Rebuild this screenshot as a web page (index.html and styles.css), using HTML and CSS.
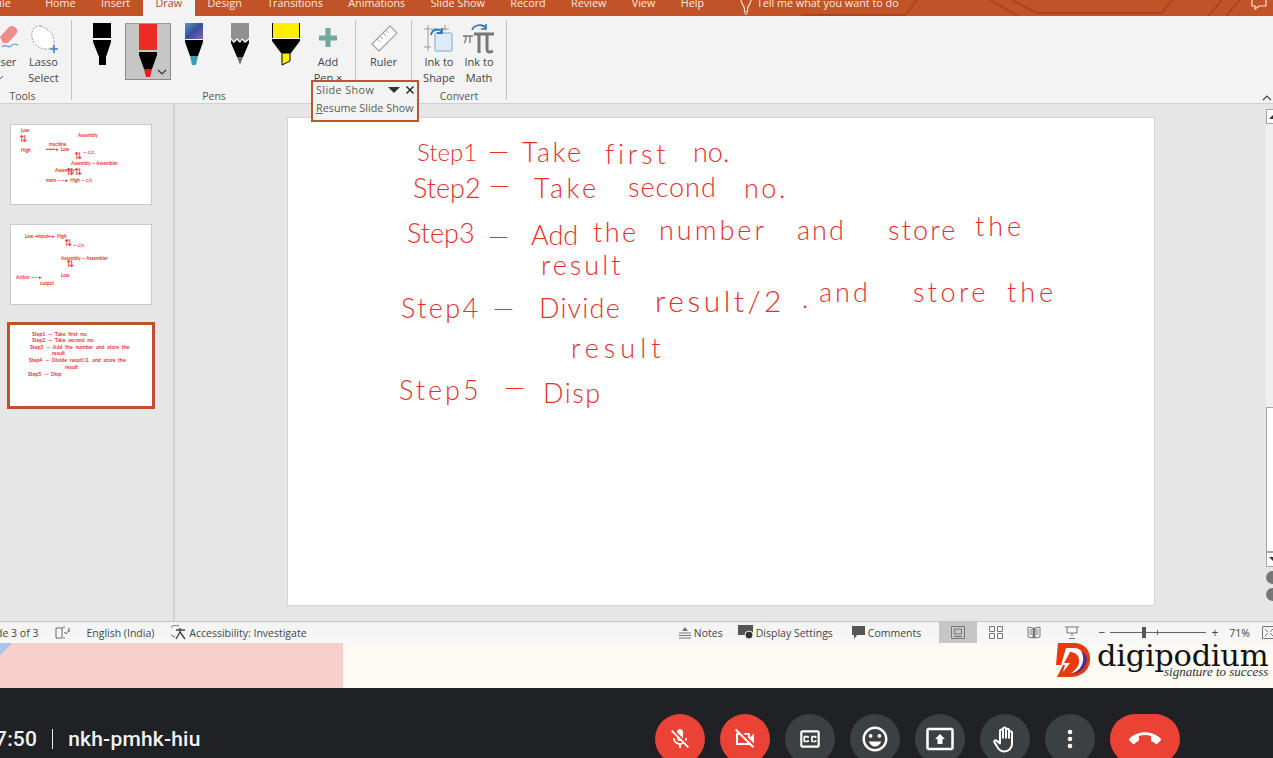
FILE: index.html
```html
<!DOCTYPE html>
<html lang="en">

<head>
    <meta charset="UTF-8">
    <meta name="viewport" content="width=device-width, initial-scale=1.0">
    <title>Draw - PowerPoint</title>
    <link rel="stylesheet" href="styles.css">
</head>

<body>
    <div class="tabbar">
        <svg class="circuit" width="1273" height="16" viewBox="0 0 1273 16">
            <path d="M802 15H905L917 0M990 0L1018 16M1012 0L1036 13H1162L1172 0M1208 16L1222 0M1226 16L1240 0" fill="none" stroke="#a94522" stroke-width="2" />
        </svg>
        <div class="tab tab-file">File</div>
        <div class="tab">Home</div>
        <div class="tab">Insert</div>
        <div class="tab tab-active">Draw</div>
        <div class="tab">Design</div>
        <div class="tab">Transitions</div>
        <div class="tab">Animations</div>
        <div class="tab">Slide Show</div>
        <div class="tab">Record</div>
        <div class="tab">Review</div>
        <div class="tab">View</div>
        <div class="tab">Help</div>
        <svg class="bulb" width="16" height="16" viewBox="0 0 16 16">
            <path d="M3 0C3 4 6 5 6.500 9V12H9.500V9C10 5 13 4 13 0M6.500 14H9.500" fill="none" stroke="#f5e3d8" stroke-width="1.200" />
        </svg>
        <div class="tell">Tell me what you want to do</div>
        <svg class="comment-icon" width="16" height="16" viewBox="0 0 16 16">
            <path d="M1 0V6H4V9L8 6H15V0" fill="none" stroke="#f8e6dc" stroke-width="1.200" />
        </svg>
    </div>

    <div class="ribbon">
        <div class="group group-tools">
            <div class="tools">
                <div class="tool tool-eraser">
                    <svg width="44" height="34" viewBox="0 0 44 34">
                        <path d="M22 14L31 4C33 2 36 3 38 5C40 7 40 9 38 11L30 20H25Z" fill="#ee8b8b" />
                        <path d="M24 24C28 20 30 26 33 23S37 21 40 22" fill="none" stroke="#5b9bd5" stroke-width="1.200" />
                    </svg>
                    <span>Eraser</span>
                    <svg class="caret" width="8" height="5" viewBox="0 0 8 5">
                        <path d="M1 1L4 4L7 1" fill="none" stroke="#555" />
                    </svg>
                </div>
                <div class="tool tool-lasso">
                    <svg width="34" height="34" viewBox="0 0 34 34">
                        <path d="M14 3C7 2 4 8 5 14C6 21 11 25 18 26C24 27 28 24 27 18C26 14 26 10 22 8C19 6 18 4 14 3Z" fill="#fff" stroke="#999" stroke-dasharray="2 1.500" />
                        <path d="M27 22V30M23 26H31" stroke="#3d85c6" stroke-width="1.600" />
                    </svg>
                    <span>Lasso<br>Select</span>
                </div>
            </div>
            <div class="group-label">Tools</div>
        </div>

        <div class="group group-pens">
            <div class="tools">
                <div class="pen">
                    <svg width="20" height="43" viewBox="0 0 20 43">
                        <path d="M1 0H19V15H1ZM1 17H19V19L14 34V42H7V34L1 19Z" fill="#000" />
                    </svg>
                </div>
                <div class="pen pen-selected">
                    <svg width="20" height="54" viewBox="0 0 20 54">
                        <path d="M1 0H19V26H1Z" fill="#ee2a24" />
                        <path d="M1 28H19V31L14 45H6L1 31Z" fill="#000" />
                        <path d="M6 45H14L12 53H8Z" fill="#d8201c" />
                    </svg>
                    <svg class="pen-caret" width="10" height="6" viewBox="0 0 10 6">
                        <path d="M1 1L5 5L9 1" fill="none" stroke="#333" stroke-width="1.200" />
                    </svg>
                </div>
                <div class="pen">
                    <svg width="20" height="43" viewBox="0 0 20 43">
                        <defs>
                            <linearGradient id="galaxy" x1="0" y1="0" x2="1" y2="1">
                                <stop offset="0" stop-color="#4aa3c4" />
                                <stop offset="0.500" stop-color="#3b4a9c" />
                                <stop offset="1" stop-color="#7a6bb5" />
                            </linearGradient>
                        </defs>
                        <path d="M1 0H19V16H1Z" fill="url(#galaxy)" />
                        <path d="M1 17H19V19L14 33H6L1 19Z" fill="#000" />
                        <path d="M6 33H14L12 42H8Z" fill="#3d9db5" />
                    </svg>
                </div>
                <div class="pen">
                    <svg width="20" height="43" viewBox="0 0 20 43">
                        <path d="M1 0H19V15L15 18L12 15L10 18L7 15L4 18L1 15Z" fill="#8b9194" />
                        <path d="M1 17L4 20L7 17L10 20L12 17L15 20L19 17V20L13 34H7L1 20Z" fill="#000" />
                        <path d="M7 34H13L10 42Z" fill="#6b7072" />
                    </svg>
                </div>
                <div class="pen">
                    <svg width="28" height="43" viewBox="0 0 28 43">
                        <path d="M0 0H28V15H0Z" fill="#ffee00" />
                        <path d="M0 0H1V15H0ZM27 0H28V15H27Z" fill="#000" />
                        <path d="M0 16H28V18L19 30H9L0 18Z" fill="#000" />
                        <path d="M10 30H18V38L10 42Z" fill="#ffee00" stroke="#000" />
                    </svg>
                </div>
                <div class="tool tool-add">
                    <svg width="20" height="34" viewBox="0 0 20 34">
                        <path d="M7.500 5H12.500V12.500H19V17.500H12.500V24H7.500V17.500H1V12.500H7.500Z" fill="#6fa99a" />
                    </svg>
                    <span>Add<br>Pen ×</span>
                </div>
            </div>
            <div class="group-label">Pens</div>
        </div>

        <div class="group group-ruler">
            <div class="tools">
                <div class="tool tool-ruler">
                    <svg width="30" height="34" viewBox="0 0 30 34">
                        <path d="M3 21L21 3L28 10L10 28Z" fill="#fff" stroke="#a8a8a8" stroke-width="1.300" />
                        <path d="M8 16L11 19M11 13L14 16M14 10L17 13M17 7L20 10" stroke="#a8a8a8" />
                    </svg>
                    <span>Ruler</span>
                </div>
            </div>
        </div>

        <div class="group group-convert">
            <div class="tools">
                <div class="tool tool-ink">
                    <svg width="32" height="34" viewBox="0 0 32 34">
                        <path d="M5 2V28M1 6H26M1 24H8M22 2V8" stroke="#9a9a9a" />
                        <rect x="12" y="10" width="17" height="18" rx="1" fill="#dcebf7" stroke="#7fa9c9" />
                        <path d="M8 12C9 6 16 5 19 9M19 5V10H14" fill="none" stroke="#2e75b6" stroke-width="1.800" />
                    </svg>
                    <span>Ink to<br>Shape</span>
                </div>
                <div class="tool tool-ink">
                    <svg width="34" height="34" viewBox="0 0 34 34">
                        <path d="M1 13H11M4 13C4 16 3 19 2 20M8 13V20" fill="none" stroke="#777" stroke-width="1.300" />
                        <path d="M12 11H32M17 11V30M25 11V26C25 29 27 30 31 28" fill="none" stroke="#777" stroke-width="3" />
                        <path d="M10 7C12 2 20 0 24 5M24 1V6H19" fill="none" stroke="#2e75b6" stroke-width="1.600" />
                    </svg>
                    <span>Ink to<br>Math</span>
                </div>
            </div>
            <div class="group-label">Convert</div>
        </div>

        <svg class="collapse" width="10" height="6" viewBox="0 0 10 6">
            <path d="M1 5L5 1L9 5" fill="none" stroke="#444" stroke-width="1.200" />
        </svg>
    </div>

    <div class="popup">
        <div class="popup-title">
            <span class="popup-name">Slide Show</span>
            <span class="popup-arrow"></span>
            <svg width="8" height="8" viewBox="0 0 8 8">
                <path d="M0.500 0.500L7.500 7.500M7.500 0.500L0.500 7.500" stroke="#222" stroke-width="1.400" />
            </svg>
        </div>
        <div class="popup-item"><u>R</u>esume Slide Show</div>
    </div>

    <div class="main">
        <div class="pane">
            <div class="thumb thumb-a">
                <span class="t-ink ta1">Low</span>
                <span class="t-ink t-arrow ta2">⇅</span>
                <span class="t-ink ta3">High</span>
                <span class="t-ink ta4">Assembly</span>
                <span class="t-ink ta5">machine</span>
                <span class="t-ink ta6">━━━► Low</span>
                <span class="t-ink t-arrow ta7">⇅</span>
                <span class="t-ink ta8">— c/c</span>
                <span class="t-ink ta9">Assembly — Assembler</span>
                <span class="t-ink ta10">Assembly</span>
                <span class="t-ink t-arrow ta11">⇅⇅</span>
                <span class="t-ink ta12">mem ——► High — c/c</span>
            </div>
            <div class="thumb thumb-b">
                <span class="t-ink tb1">Low ━input━► High</span>
                <span class="t-ink t-arrow tb2">⇅</span>
                <span class="t-ink tb3">— c/c</span>
                <span class="t-ink tb4">Assembly — Assembler</span>
                <span class="t-ink t-arrow tb5">⇅</span>
                <span class="t-ink tb6">Low</span>
                <span class="t-ink tb7">Action ——►</span>
                <span class="t-ink tb8">output</span>
            </div>
            <div class="thumb thumb-c">
                <span class="t-ink tc tc1">Step1 — Take first no.</span>
                <span class="t-ink tc tc2">Step2 — Take second no.</span>
                <span class="t-ink tc tc3">Step3 — Add the number and store the</span>
                <span class="t-ink tc tc4">result</span>
                <span class="t-ink tc tc5">Step4 — Divide result/2. and store the</span>
                <span class="t-ink tc tc6">result</span>
                <span class="t-ink tc tc7">Step5 — Disp</span>
            </div>
        </div>
        <div class="canvas">
            <div class="slide">
                <span class="ink a1">Step1</span>
                <span class="ink a2">—</span>
                <span class="ink a3">Take</span>
                <span class="ink a4">first</span>
                <span class="ink a5">no.</span>

                <span class="ink b1">Step2</span>
                <span class="ink b2">—</span>
                <span class="ink b3">Take</span>
                <span class="ink b4">second</span>
                <span class="ink b5">no.</span>

                <span class="ink c1">Step3</span>
                <span class="ink c2">—</span>
                <span class="ink c3">Add</span>
                <span class="ink c4">the</span>
                <span class="ink c5">number</span>
                <span class="ink c6">and</span>
                <span class="ink c7">store</span>
                <span class="ink c8">the</span>
                <span class="ink c9">result</span>

                <span class="ink d1">Step4</span>
                <span class="ink d2">—</span>
                <span class="ink d3">Divide</span>
                <span class="ink d4">result/2</span>
                <span class="ink d5">.</span>
                <span class="ink d6">and</span>
                <span class="ink d7">store</span>
                <span class="ink d8">the</span>
                <span class="ink d9">result</span>

                <span class="ink e1">Step5</span>
                <span class="ink e2">—</span>
                <span class="ink e3">Disp</span>
            </div>
        </div>
        <div class="scrollbar">
            <div class="sb-btn"><span class="tri-up"></span></div>
            <div class="sb-track"></div>
            <div class="sb-thumb"></div>
            <div class="sb-btn"><span class="tri-down"></span></div>
            <div class="sb-page"></div>
            <div class="sb-page"></div>
        </div>
    </div>

    <div class="statusbar">
        <span class="st-slide">Slide 3 of 3</span>
        <svg class="st-book" width="15" height="14" viewBox="0 0 15 14">
            <path d="M7 2H1V12H7V2ZM7 2C8 1 9 1 10 1M10 12H8M14 2V6M9 6L11 8L14 4" fill="none" stroke="#666" />
        </svg>
        <span class="st-lang">English (India)</span>
        <svg class="st-access" width="16" height="15" viewBox="0 0 16 15">
            <path d="M8 1A6 6 0 1 0 4 12" fill="none" stroke="#666" />
            <path d="M9 3V7M5 5H14M9 7L5 14M9 7L14 14" fill="none" stroke="#444" stroke-width="1.400" />
        </svg>
        <span class="st-a11y">Accessibility: Investigate</span>

        <div class="st-right">
            <svg width="12" height="12" viewBox="0 0 12 12">
                <path d="M0 6H12M0 8.500H12M0 11H12" stroke="#777" />
                <path d="M6 0L9 4H3Z" fill="#777" />
            </svg>
            <span class="st-notes">Notes</span>
            <svg class="st-display" width="16" height="15" viewBox="0 0 16 15">
                <path d="M0 0H15V10H0Z" fill="#555" />
                <circle cx="11" cy="10" r="4" fill="#333" stroke="#f2f2f2" />
            </svg>
            <span class="st-settings">Display Settings</span>
            <svg class="st-comment" width="13" height="13" viewBox="0 0 13 13">
                <path d="M0 0H13V9H5L2 13V9H0Z" fill="#555" />
            </svg>
            <span class="st-comments">Comments</span>
            <div class="view view-active">
                <svg width="14" height="13" viewBox="0 0 14 13">
                    <path d="M.500.500H13.500V12.500H.500ZM3.500 3H10.500V8H3.500ZM3 10.500H11" fill="none" stroke="#777" />
                </svg>
            </div>
            <div class="view">
                <svg width="14" height="13" viewBox="0 0 14 13">
                    <path d="M.500.500H5.500V5.500H.500ZM8.500.500H13.500V5.500H8.500ZM.500 7.500H5.500V12.500H.500ZM8.500 7.500H13.500V12.500H8.500Z" fill="none" stroke="#777" />
                </svg>
            </div>
            <div class="view">
                <svg width="14" height="13" viewBox="0 0 14 13">
                    <path d="M1 1L6 2V12L1 11ZM13 1L8 2V12L13 11ZM6.500 2H7.500V12H6.500ZM2.500 4H5M2.500 6H5M2.500 8H5M9 4H11.500M9 6H11.500M9 8H11.500" fill="none" stroke="#777" />
                </svg>
            </div>
            <div class="view">
                <svg width="14" height="13" viewBox="0 0 14 13">
                    <path d="M0 1H14M2 1.500V7H12V1.500M7 7V10M4 12.500H10" fill="none" stroke="#777" />
                </svg>
            </div>
            <div class="zoom">
                <span class="zoom-sign">−</span>
                <div class="slider">
                    <span class="slider-mid"></span>
                    <span class="slider-thumb"></span>
                </div>
                <span class="zoom-sign">+</span>
            </div>
            <span class="st-pct">71%</span>
            <svg class="st-fit" width="14" height="13" viewBox="0 0 14 13">
                <path d="M.500.500H13.500V12.500H.500ZM3 3L6 6M11 3L8 6M3 10L6 7M11 10L8 7" fill="none" stroke="#777" />
            </svg>
        </div>
    </div>

    <div class="strip">
        <div class="strip-left"></div>
        <div class="strip-right">
            <svg class="logo-mark" width="38" height="35" viewBox="3 0 36 35">
                <path d="M6 0H22C33 0 39 8 38 18C37 28 29 34 18 34H5L11 22H4Z" fill="#e93a0c" />
                <path d="M14 5H22C29 5 33 11 32 18C31 24 26 29 19 30C25 26 28 21 27 16C26 11 22 9 18 9L12 20H18L11 29L13 22H9Z" fill="#fff" />
                <path d="M29 8C33 14 32 24 22 31C28 30 35 24 35 16C35 13 33 10 29 8Z" fill="#5a2a8c" />
            </svg>
            <div class="logo-text">
                <div class="logo-name">digipodium</div>
                <div class="logo-tag">signature to success</div>
            </div>
        </div>
    </div>

    <div class="meetbar">
        <div class="meet-info">
            <span class="meet-time">7:50</span>
            <span class="meet-divider"></span>
            <span class="meet-code">nkh-pmhk-hiu</span>
        </div>
        <div class="meet-controls">
            <div class="ctrl ctrl-red">
                <svg width="24" height="24" viewBox="0 0 24 24">
                    <path d="M19 11h-1.700c0 .74-.16 1.430-.43 2.050l1.230 1.230c.56-.98.9-2.090.9-3.280zm-4.020.17c0-.06.02-.11.02-.17V5c0-1.660-1.340-3-3-3s-3 1.340-3 3v.18l5.980 5.990zM4.270 3L3 4.270l6.010 6.010V11c0 1.660 1.330 3 2.990 3 .22 0 .44-.03.65-.08l1.660 1.660c-.71.33-1.500.52-2.310.52-2.760 0-5.300-2.100-5.300-5.100H5c0 3.410 2.720 6.230 6 6.720V21h2v-3.280c.91-.13 1.770-.45 2.540-.9L19.730 21 21 19.730 4.270 3z" />
                </svg>
            </div>
            <div class="ctrl ctrl-red">
                <svg width="24" height="24" viewBox="0 0 24 24">
                    <path d="M9.560 8l-2-2-4.150-4.140L2 3.270 4.730 6H4c-.55 0-1 .45-1 1v10c0 .55.45 1 1 1h12c.21 0 .39-.08.55-.18L19.730 21l1.410-1.410-8.860-8.860L9.560 8zM5 16V8h1.730l8 8H5zm10-8v2.610l6 6V6.500l-4 4V7c0-.55-.45-1-1-1h-5.610l2 2H15z" />
                </svg>
            </div>
            <div class="ctrl">
                <svg width="26" height="26" viewBox="0 0 24 24">
                    <path d="M19 4H5c-1.110 0-2 .9-2 2v12c0 1.100.89 2 2 2h14c1.100 0 2-.9 2-2V6c0-1.100-.9-2-2-2zm0 14H5V6h14v12zM7 15h3c.55 0 1-.45 1-1v-1H9.500v.5h-2v-3h2v.5H11v-1c0-.55-.45-1-1-1H7c-.55 0-1 .45-1 1v4c0 .55.45 1 1 1zm7 0h3c.55 0 1-.45 1-1v-1h-1.500v.5h-2v-3h2v.5H18v-1c0-.55-.45-1-1-1h-3c-.55 0-1 .45-1 1v4c0 .55.45 1 1 1z" />
                </svg>
            </div>
            <div class="ctrl">
                <svg width="30" height="30" viewBox="0 0 24 24">
                    <path d="M11.990 2C6.470 2 2 6.480 2 12s4.470 10 9.990 10C17.520 22 22 17.520 22 12S17.520 2 11.990 2zM12 20c-4.420 0-8-3.580-8-8s3.580-8 8-8 8 3.580 8 8-3.580 8-8 8z" />
                    <circle cx="15.500" cy="9.500" r="1.500" />
                    <circle cx="8.500" cy="9.500" r="1.500" />
                    <path d="M12 18c2.280 0 4.220-1.660 5-4H7c.78 2.340 2.720 4 5 4z" />
                </svg>
            </div>
            <div class="ctrl">
                <svg width="30" height="30" viewBox="0 0 24 24">
                    <path d="M21 3H3c-1.110 0-2 .89-2 2v14c0 1.110.89 2 2 2h18c1.110 0 2-.89 2-2V5c0-1.110-.89-2-2-2zm0 16.020H3V4.980h18v14.040zM10 12H8l4-4 4 4h-2v4h-4v-4z" />
                </svg>
            </div>
            <div class="ctrl">
                <svg width="30" height="30" viewBox="0 0 24 24">
                    <path class="hand" d="M8 12V5.500a1.200 1.200 0 0 1 2.400 0V11M10.400 4a1.200 1.200 0 0 1 2.400 0V11M12.800 5a1.200 1.200 0 0 1 2.400 0V11M15.200 7a1.200 1.200 0 0 1 2.400 0v9a6 6 0 0 1-6 6c-2.500 0-4-1-5.200-2.800L3.500 14.500c-.6-.9.8-2 1.700-1.200L8 15.500V12" />
                </svg>
            </div>
            <div class="ctrl">
                <svg width="24" height="24" viewBox="0 0 24 24">
                    <circle cx="12" cy="5" r="2.300" />
                    <circle cx="12" cy="12" r="2.300" />
                    <circle cx="12" cy="19" r="2.300" />
                </svg>
            </div>
            <div class="ctrl ctrl-red ctrl-end">
                <svg width="32" height="32" viewBox="0 0 24 24">
                    <path d="M12 9c-1.600 0-3.150.25-4.600.72v3.100c0 .39-.23.74-.56.9-.98.49-1.870 1.120-2.660 1.850-.18.18-.43.28-.7.28-.28 0-.53-.11-.71-.29L.29 13.080c-.18-.17-.29-.42-.29-.7 0-.28.11-.53.29-.71C3.340 8.780 7.460 7 12 7s8.660 1.780 11.710 4.670c.18.18.29.43.29.71 0 .28-.11.53-.29.71l-2.480 2.480c-.18.18-.43.29-.71.29-.27 0-.52-.11-.7-.28-.79-.74-1.690-1.360-2.670-1.850-.33-.16-.56-.5-.56-.9v-3.100C15.150 9.250 13.600 9 12 9z" />
                </svg>
            </div>
        </div>
    </div>
</body>

</html>
```

FILE: styles.css
```css
* {
    box-sizing: border-box;
}

html,
body {
    margin: 0;
    padding: 0;
}

body {
    position: relative;
    width: 1273px;
    height: 758px;
    overflow: hidden;
    font-family: "Open Sans", sans-serif;
    font-size: 11px;
    color: #444;
    background: #202124;
}

/* tabs, cut off at the top by the shared window */
.tabbar {
    position: relative;
    display: flex;
    align-items: flex-end;
    height: 16px;
    margin-left: -19px;
    width: 1292px;
    overflow: hidden;
    background: #c25327;
    color: #f8e9e0;
    font-size: 10.800px;
}

.circuit {
    position: absolute;
    left: 19px;
    top: 0;
}

.tab {
    position: relative;
    height: 24px;
    line-height: 22px;
    padding: 0 12.700px;
    white-space: nowrap;
}

.tab-file {
    margin-right: 9px;
}

.tab-active {
    background: #f3f3f3;
    color: #a8482a;
}

.bulb {
    position: relative;
    margin: 0 0 0 21px;
    flex: none;
}

.tell {
    position: relative;
    height: 24px;
    line-height: 22px;
    margin-left: 3px;
    white-space: nowrap;
}

.comment-icon {
    position: relative;
    margin-left: auto;
    margin-right: 6px;
}

/* ribbon */
.ribbon {
    position: relative;
    display: flex;
    height: 88px;
    padding: 4px 0 3px;
    background: #f3f3f3;
    border-bottom: 1px solid #cfcfcf;
}

.group {
    display: flex;
    flex-direction: column;
    border-right: 1px solid #c6c6c6;
}

.group-tools {
    width: 72px;
}

.group-tools .group-label {
    padding-right: 26px;
}

.group-pens {
    width: 284px;
    padding-left: 7px;
}

.group-pens .group-label {
    padding-right: 6px;
}

.group-ruler {
    width: 56px;
}

.group-convert {
    width: 95px;
}

.tools {
    display: flex;
    flex: 1;
    padding-top: 3px;
}

.group-label {
    margin-top: 2px;
    text-align: center;
    font-size: 10.500px;
    line-height: 16px;
    color: #555;
}

.tool {
    display: flex;
    flex-direction: column;
    align-items: center;
    text-align: center;
    line-height: 16px;
    font-size: 11px;
}

.tool svg {
    flex: none;
    margin-bottom: -3px;
}

.tool-eraser {
    width: 44px;
    margin-left: -22px;
}

.tool-eraser .caret {
    margin-top: 5px;
}

.tool-lasso {
    width: 43px;
}

.tool-add {
    width: 38px;
}

.tool-ruler {
    width: 55px;
}

.tool-ink {
    width: 40px;
}

.group-convert .tools {
    padding-left: 7px;
}

.pen {
    position: relative;
    display: flex;
    justify-content: center;
    width: 46px;
    height: 57px;
}

.pen-selected {
    background: #c6c6c6;
    border: 1px solid #8a8a8a;
    border-top-color: #9c9c9c;
}

.pen-caret {
    position: absolute;
    right: 3px;
    bottom: 4px;
}

.collapse {
    position: absolute;
    right: 1px;
    bottom: 2px;
}

/* floating slide show toolbar */
.popup {
    position: absolute;
    z-index: 2;
    left: 311px;
    top: 80px;
    width: 108px;
    height: 42px;
    padding: 0 3px;
    background: #f3f3f3;
    border: 2px solid #bf5530;
    font-size: 10.800px;
    color: #5c5c5c;
}

.popup-title {
    display: flex;
    align-items: center;
    height: 15px;
}

.popup-name {
    letter-spacing: 0.400px;
}

.popup-arrow {
    width: 0;
    height: 0;
    margin-left: auto;
    margin-right: 6px;
    border-left: 6px solid transparent;
    border-right: 6px solid transparent;
    border-top: 6px solid #333;
}

.popup-item {
    margin-top: 3px;
    line-height: 16px;
    white-space: nowrap;
}

/* main area */
.main {
    display: flex;
    height: 518px;
    background: #e6e6e6;
    border-bottom: 1px solid #c6c6c6;
}

.pane {
    display: flex;
    flex-direction: column;
    width: 175px;
    flex: none;
    padding: 20px 0 0 10px;
    border-right: 2px solid #d2d2d2;
}

.thumb {
    position: relative;
    width: 142px;
    height: 81px;
    background: #fff;
    border: 1px solid #c9c9c9;
}

.thumb-b {
    margin-top: 19px;
}

.thumb-c {
    width: 148px;
    height: 87px;
    margin: 17px 0 0 -3px;
    border: 3px solid #b9532c;
}

.t-ink {
    position: absolute;
    font-family: "Lato", sans-serif;
    font-size: 4.600px;
    line-height: 6px;
    font-weight: 700;
    color: #e8322f;
    white-space: nowrap;
}

.t-arrow {
    font-size: 10px;
    line-height: 10px;
    font-weight: 400;
}

.tc {
    font-size: 5.200px;
    word-spacing: 1.500px;
}

.ta1 { left: 10px; top: 2px; }
.ta2 { left: 8px; top: 8px; }
.ta3 { left: 10px; top: 22px; }
.ta4 { left: 67px; top: 7px; }
.ta5 { left: 38px; top: 16px; }
.ta6 { left: 35px; top: 21px; }
.ta7 { left: 63px; top: 25px; }
.ta8 { left: 72px; top: 24px; }
.ta9 { left: 60px; top: 35px; }
.ta10 { left: 44px; top: 42px; }
.ta11 { left: 55px; top: 41px; }
.ta12 { left: 35px; top: 52px; }

.tb1 { left: 14px; top: 8px; }
.tb2 { left: 53px; top: 12px; }
.tb3 { left: 62px; top: 17px; }
.tb4 { left: 50px; top: 30px; }
.tb5 { left: 55px; top: 33px; }
.tb6 { left: 50px; top: 47px; }
.tb7 { left: 5px; top: 49px; }
.tb8 { left: 29px; top: 55px; }

.tc1 { left: 22px; top: 6px; }
.tc2 { left: 22px; top: 12px; }
.tc3 { left: 20px; top: 19px; }
.tc4 { left: 42px; top: 25px; }
.tc5 { left: 19px; top: 32px; }
.tc6 { left: 55px; top: 39px; }
.tc7 { left: 18px; top: 46px; }

.canvas {
    flex: 1;
    padding: 13px 0 0 112px;
}

.slide {
    position: relative;
    width: 868px;
    height: 489px;
    background: #fff;
    border: 1px solid #d4d4d4;
}

/* the handwriting on the slide, word by word as it was written */
.ink {
    position: absolute;
    font-family: "Lato", sans-serif;
    font-weight: 300;
    font-size: 27px;
    line-height: 30px;
    color: #e5302d;
    white-space: nowrap;
}

.a1 { left: 129px; top: 19px; font-size: 24px; }
.a2 { left: 200px; top: 18px; }
.a3 { left: 234px; top: 19px; letter-spacing: 2.500px; }
.a4 { left: 317px; top: 21px; letter-spacing: 3.800px; }
.a5 { left: 405px; top: 19px; }

.b1 { left: 125px; top: 55px; }
.b2 { left: 201px; top: 52px; }
.b3 { left: 246px; top: 55px; letter-spacing: 3.500px; }
.b4 { left: 340px; top: 54px; letter-spacing: 1px; }
.b5 { left: 456px; top: 55px; letter-spacing: 2.500px; }

.c1 { left: 119px; top: 100px; }
.c2 { left: 200px; top: 103px; }
.c3 { left: 243px; top: 102px; }
.c4 { left: 305px; top: 99px; letter-spacing: 2.500px; }
.c5 { left: 371px; top: 97px; letter-spacing: 3px; }
.c6 { left: 509px; top: 97px; letter-spacing: 2px; }
.c7 { left: 600px; top: 97px; letter-spacing: 2.200px; }
.c8 { left: 687px; top: 93px; letter-spacing: 4px; }
.c9 { left: 253px; top: 132px; letter-spacing: 3px; }

.d1 { left: 113px; top: 175px; letter-spacing: 2.400px; }
.d2 { left: 205px; top: 175px; }
.d3 { left: 251px; top: 175px; letter-spacing: 1.200px; }
.d4 { left: 367px; top: 167px; font-size: 30px; letter-spacing: 3.500px; }
.d5 { left: 514px; top: 165px; }
.d6 { left: 531px; top: 159px; letter-spacing: 3px; }
.d7 { left: 625px; top: 159px; letter-spacing: 3.400px; }
.d8 { left: 719px; top: 159px; letter-spacing: 4px; }
.d9 { left: 283px; top: 215px; letter-spacing: 5px; }

.e1 { left: 111px; top: 257px; letter-spacing: 3px; }
.e2 { left: 216px; top: 254px; }
.e3 { left: 255px; top: 260px; letter-spacing: 1.500px; }

.scrollbar {
    display: flex;
    flex-direction: column;
    width: 7px;
    flex: none;
    padding-top: 5px;
}

.sb-btn {
    height: 15px;
    padding: 4px 0 0 2px;
    background: #fff;
    border: 1px solid #a5a5a5;
    border-right: none;
}

.tri-up,
.tri-down {
    display: block;
    width: 0;
    height: 0;
    border-left: 5px solid transparent;
    border-right: 5px solid transparent;
}

.tri-up {
    border-bottom: 5px solid #333;
}

.tri-down {
    border-top: 5px solid #333;
}

.sb-track {
    height: 283px;
    background: #f0f0f0;
}

.sb-thumb {
    height: 145px;
    background: #fff;
    border: 1px solid #a5a5a5;
    border-right: none;
}

.sb-page {
    height: 13px;
    margin-top: 4px;
    background: #777;
    border-radius: 7px 0 0 7px;
}

/* status bar */
.statusbar {
    display: flex;
    align-items: center;
    height: 21px;
    margin-left: -15px;
    width: 1288px;
    background: linear-gradient(#f3f3f3, #f8f8f8);
    font-size: 10.500px;
    color: #444;
    white-space: nowrap;
}

.st-book {
    margin-left: 17px;
}

.st-lang {
    margin-left: 16px;
}

.st-access {
    margin-left: 17px;
}

.st-a11y {
    margin-left: 2px;
}

.st-right {
    display: flex;
    align-items: center;
    height: 100%;
    margin-left: auto;
}

.st-notes {
    margin-left: 3px;
}

.st-display {
    margin-left: 15px;
}

.st-settings {
    margin-left: 2px;
}

.st-comment {
    margin-left: 19px;
}

.st-comments {
    margin-left: 3px;
    margin-right: 18px;
}

.view {
    display: flex;
    align-items: center;
    justify-content: center;
    width: 38px;
    height: 100%;
}

.view-active {
    background: #c6c6c6;
}

.zoom {
    display: flex;
    align-items: center;
    margin-left: 6px;
}

.zoom-sign {
    width: 9px;
    text-align: center;
    font-size: 12px;
}

.slider {
    position: relative;
    width: 96px;
    height: 1px;
    margin: 0 4px;
    background: #666;
}

.slider-mid {
    position: absolute;
    left: 47px;
    top: -2px;
    width: 1px;
    height: 5px;
    background: #666;
}

.slider-thumb {
    position: absolute;
    left: 32px;
    top: -5px;
    width: 4px;
    height: 11px;
    background: #555;
}

.st-pct {
    margin-left: 10px;
}

.st-fit {
    margin-left: 12px;
    margin-right: -3px;
}

/* presenter's slide footer */
.strip {
    display: flex;
    height: 45px;
    background: #fdf9f3;
}

.strip-left {
    width: 343px;
    background: linear-gradient(135deg, #a9c5ea 0, #a9c5ea 9px, #f8d0cb 9px);
}

.strip-right {
    display: flex;
    align-items: flex-start;
    flex: 1;
    padding-left: 711px;
}

.logo-mark {
    flex: none;
}

.logo-text {
    margin-left: 5px;
    color: #111;
}

.logo-name {
    font-family: "DejaVu Serif", serif;
    font-size: 30.500px;
    line-height: 25px;
    letter-spacing: -0.300px;
}

.logo-tag {
    font-family: "Liberation Serif", serif;
    font-style: italic;
    font-size: 13px;
    line-height: 11px;
    margin-top: -2px;
    text-align: right;
    color: #333;
}

/* meeting controls */
.meetbar {
    display: flex;
    height: 70px;
    background: #202124;
    padding-top: 26px;
    overflow: hidden;
}

.meet-info {
    display: flex;
    align-items: center;
    height: 50px;
    margin-left: -5px;
    font-family: "Roboto", sans-serif;
    font-weight: 500;
    font-size: 21px;
    letter-spacing: 0.200px;
    color: #f1f3f4;
    white-space: nowrap;
}

.meet-divider {
    width: 1px;
    height: 20px;
    margin: 0 15px;
    background: #e8eaed;
}

.meet-controls {
    display: flex;
    gap: 15px;
    margin-left: auto;
    margin-right: 93px;
}

.ctrl {
    display: flex;
    align-items: center;
    justify-content: center;
    flex: none;
    width: 50px;
    height: 50px;
    border-radius: 50%;
    background: #3c4043;
    fill: #fff;
}

.ctrl-red {
    background: #ea4335;
}

.ctrl-end {
    width: 70px;
    border-radius: 25px;
}

.hand {
    fill: none;
    stroke: #fff;
    stroke-width: 1.600;
    stroke-linecap: round;
    stroke-linejoin: round;
}
```
